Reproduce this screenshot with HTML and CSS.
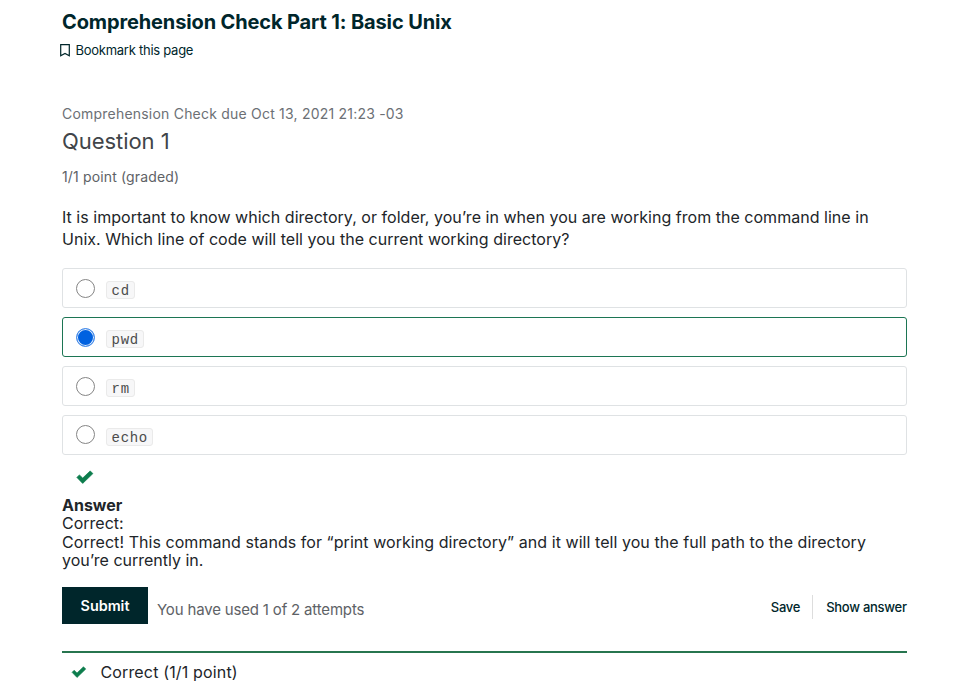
FILE: index.html
```html
<!DOCTYPE html>
<html lang="en">
<head><meta charset="utf-8"><title>Comprehension Check</title><link rel="stylesheet" href="styles.css"></head>
<body>
<main>
<h1>Comprehension Check Part 1: Basic Unix</h1>
<div class="bookmark"><svg width="10" height="13" viewBox="0 0 10 13"><path d="M.7.7h8.6v11.1L5 9.5.7 11.8z" fill="none" stroke="#00262b" stroke-width="1.2"/></svg><span>Bookmark this page</span></div>
<p class="due">Comprehension Check due Oct 13, 2021 21:23 -03</p>
<h2>Question 1</h2>
<p class="points">1/1 point (graded)</p>
<p class="prompt">It is important to know which directory, or folder, you’re in when you are working from the command line in<br>Unix. Which line of code will tell you the current working directory?</p>
<div class="choices">
<label class="choice"><i class="radio"></i><code>cd</code></label>
<label class="choice selected"><i class="radio"></i><code>pwd</code></label>
<label class="choice"><i class="radio"></i><code>rm</code></label>
<label class="choice"><i class="radio"></i><code>echo</code></label>
</div>
<svg class="check" width="18" height="14" viewBox="0 0 18 14"><path d="M.9 7.4 3.4 4.9 6.7 8.1 14.2.9 16.9 3.6 6.7 13.4z" fill="#0d7d4d" stroke="#0d7d4d" stroke-width=".7" stroke-linejoin="round"/></svg>
<div class="answer"><strong>Answer</strong><br>Correct:<br><span>Correct! This command stands for “print working directory” and it will tell you the full path to the directory</span><br>you’re currently in.</div>
<div class="actions"><button class="submit">Submit</button><span class="attempts">You have used 1 of 2 attempts</span><div class="links"><button>Save</button><button>Show answer</button></div></div>
<div class="result"><svg width="16" height="12" viewBox="0 0 18 14"><path d="M.9 7.4 3.4 4.9 6.7 8.1 14.2.9 16.9 3.6 6.7 13.4z" fill="#0d7d4d" stroke="#0d7d4d" stroke-width=".7" stroke-linejoin="round"/></svg><span>Correct (1/1 point)</span></div>
</main>
</body>
</html>
```
FILE: styles.css
```css
* { box-sizing: border-box; }
body { margin: 0; background: #fff; color: #212529; font-family: Inter, sans-serif; font-size: 16px; overflow: hidden; }
main { width: 845px; margin-left: 62px; padding-top: 10px; }
h1, h2, p { margin: 0; }
h1 { font-size: 20px; line-height: 24px; font-weight: 700; color: #00262b; white-space: nowrap; letter-spacing: -.13px; }
.bookmark { display: flex; align-items: center; gap: 5.5px; height: 18px; margin: 7px 0 0 -2px; font-size: 13px; letter-spacing: -.26px; color: #00262b; }
.due { margin-top: 45px; font-size: 14px; line-height: 20px; color: #6c7075; letter-spacing: .21px; }
h2 { margin-top: 3px; font-size: 22px; line-height: 28px; font-weight: 400; color: #414549; letter-spacing: -.06px; }
.points { margin-top: 13px; font-size: 14px; line-height: 18px; color: #5e6266; letter-spacing: .15px; }
.prompt { margin-top: 20px; line-height: 22px; white-space: nowrap; letter-spacing: .028px; }
.choices { margin-top: 18px; display: grid; gap: 9px; }
.choice { height: 40px; border: 1px solid #dfe2e4; border-radius: 3px; display: flex; align-items: center; padding-left: 13px; }
.selected { border-color: #1c7553; }
.radio { width: 19px; height: 19px; border: 1px solid #858585; border-radius: 50%; margin-right: 11px; }
.choice:last-child .radio { margin-bottom: 2px; }
.selected .radio { border-color: #4a8eea; background: #0061e0; box-shadow: inset 0 0 0 1px #e0ecfb; }
code { font: 14px/16px "Courier New", "Liberation Mono", monospace; letter-spacing: .68px; color: #4c4c4c; background: #f7f7f8; border: 1px solid #eaeaea; border-radius: 3px; padding: 1px 4px 0 4.6px; margin-top: 4px; height: 18px; }
.check { display: block; margin: 15px 0 0 14px; }
.answer { margin-top: 12px; line-height: 18.4px; white-space: nowrap; }
.answer span { letter-spacing: .057px; }
.actions { display: flex; height: 37px; margin-top: 17px; }
button { border: 0; background: none; padding: 0; font: 500 13px Inter, sans-serif; letter-spacing: -.27px; color: #00262b; }
.submit { width: 86px; height: 37px; background: #00262b; color: #fff; font-size: 14.4px; font-weight: 600; letter-spacing: 0; }
.attempts { margin: 14px 0 0 9px; font-size: 15px; line-height: 18px; letter-spacing: -.17px; color: #5e6266; }
.links { display: flex; margin: 8px .3px 0 auto; height: 24px; }
.links button + button { border-left: 1px solid #ddd; margin-left: 12px; padding-left: 13px; }
.result { border-top: 2px solid #27754f; margin-top: 27px; padding: 8px 0 0 9px; height: 46px; display: flex; gap: 13.4px; line-height: 22px; letter-spacing: .16px; }
.result svg { margin-top: 5px; }
```
